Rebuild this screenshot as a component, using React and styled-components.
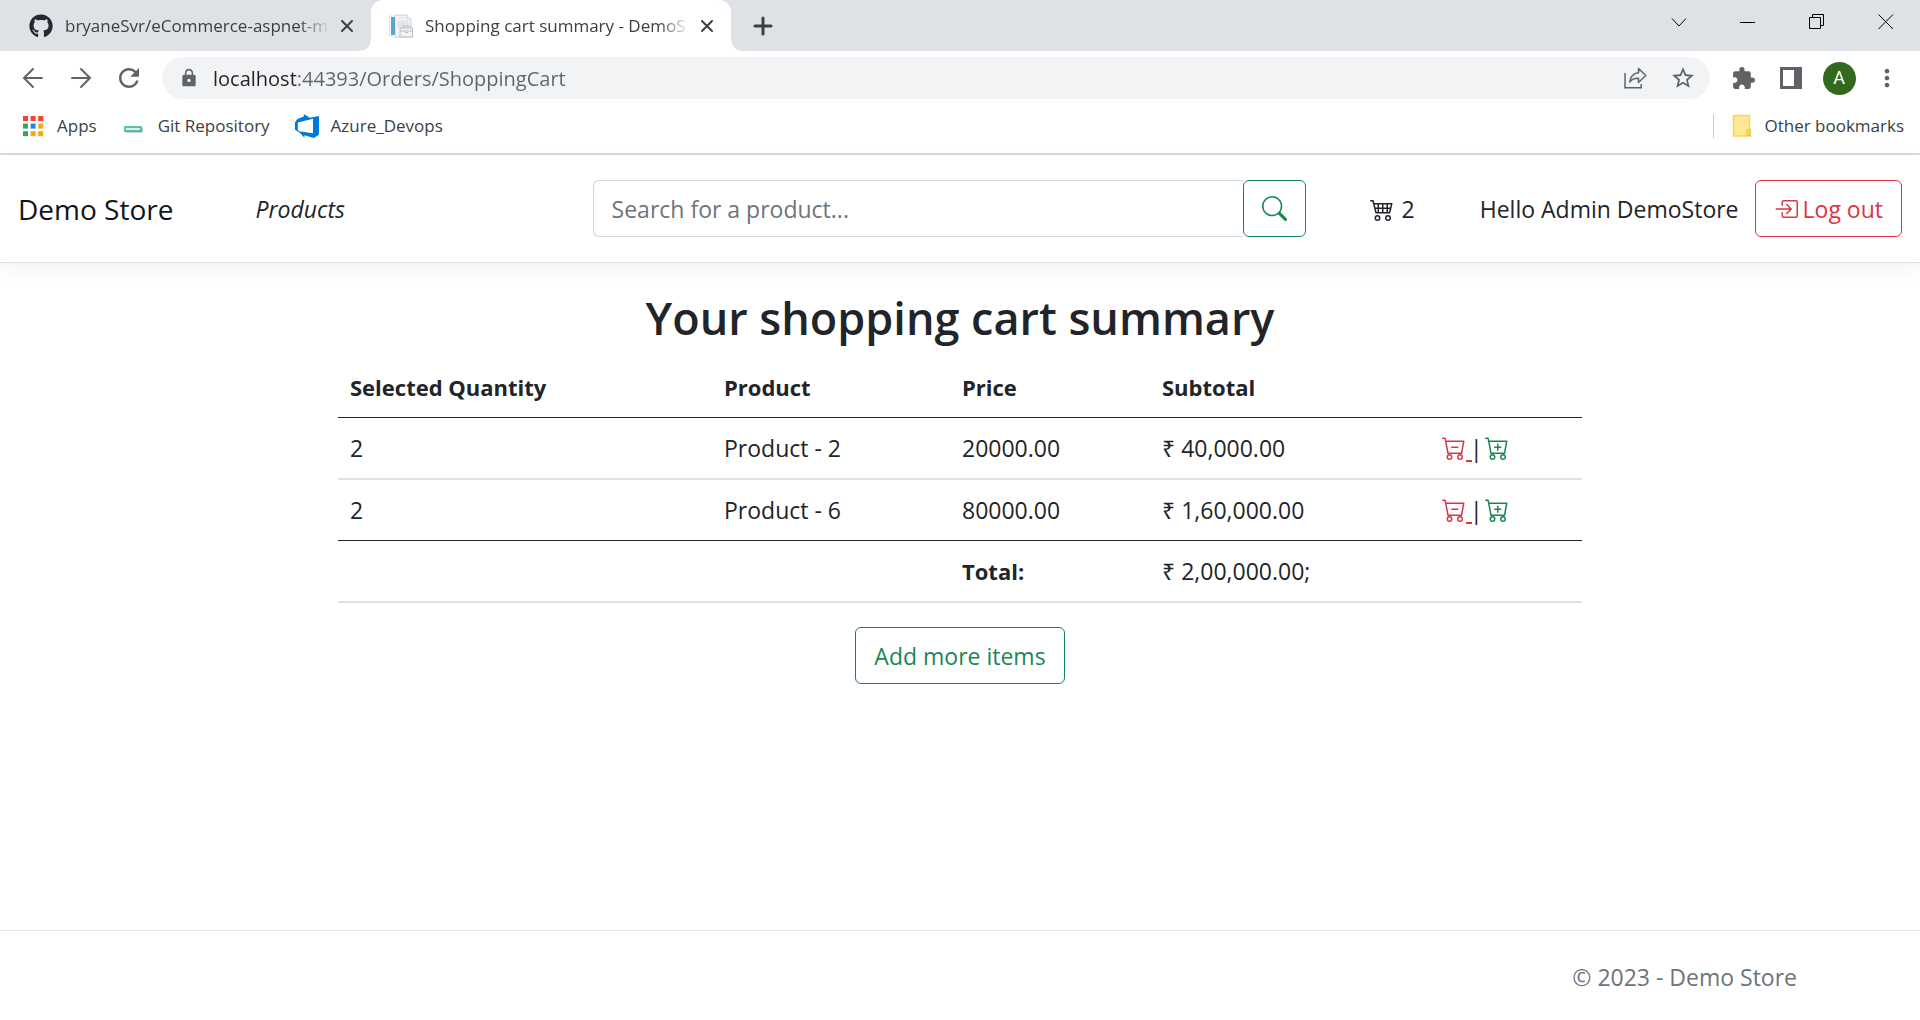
import React from "react";
import styled, { createGlobalStyle } from "styled-components";
import { BsCart4, BsSearch, BsBoxArrowInRight, BsCartDash, BsCartPlus } from "react-icons/bs";
import { FaGithub } from "react-icons/fa";
import { MdRefresh, MdLock, MdStarBorder, MdExtension, MdMoreVert } from "react-icons/md";

const GlobalStyle = createGlobalStyle`
  *, *::before, *::after { box-sizing: border-box; }
  body {
    margin: 0;
    background: #fff;
    color: #212529;
    font: 400 23px/36px "Open Sans", "Noto Sans", sans-serif;
  }
  button, input { font: inherit; color: inherit; }
  button { cursor: pointer; }
  svg { display: block; }
`;

const Window = styled.div`
  display: flex;
  flex-direction: column;
  min-height: 100vh;
`;

/* Browser chrome */
const Chrome = styled.header`
  border-bottom: 2px solid #dadada;
  font-size: 17px;
  line-height: 24px;
  color: #3c4043;
`;

const TabStrip = styled.div`
  display: flex;
  height: 51px;
  padding-left: 11px;
  background: #dee1e6;
`;

const Tab = styled.div`
  position: relative;
  display: flex;
  align-items: center;
  width: 360px;
  padding: 0 12px 0 18px;
  background: ${(p) => (p.$active ? "#fff" : "transparent")};
  border-radius: 12px 12px 0 0;
  &::before, &::after {
    content: ${(p) => (p.$active ? '""' : "none")};
    position: absolute;
    bottom: 0;
    width: 10px;
    height: 10px;
  }
  &::before { right: 100%; background: radial-gradient(circle at 0 0, transparent 9px, #fff 10px); }
  &::after { left: 100%; background: radial-gradient(circle at 100% 0, transparent 9px, #fff 10px); }
`;

const TabTitle = styled.span`
  flex: 1;
  min-width: 0;
  margin: 0 5px 0 12px;
  white-space: nowrap;
  mask-image: linear-gradient(90deg, #000 calc(100% - 32px), transparent);
`;

const IconButton = styled.button`
  display: flex;
  align-items: center;
  justify-content: center;
  flex: none;
  width: ${(p) => p.$width || 48}px;
  height: ${(p) => p.$height || 42}px;
  padding: 0;
  border: 0;
  background: none;
  color: ${(p) => p.$color || "#5f6368"};
`;

const WindowControls = styled.div`
  display: flex;
  margin-left: auto;
`;

const Toolbar = styled.div`
  display: flex;
  align-items: center;
  height: 54px;
  padding: 0 9px;
`;

const AddressBar = styled.label`
  display: flex;
  align-items: center;
  flex: 1;
  height: 42px;
  margin: 0 9px;
  padding: 0 3px 0 17px;
  border-radius: 21px;
  background: #f1f3f4;
  color: #5f6368;
`;

const AddressInput = styled.input`
  flex: 1;
  min-width: 0;
  height: 42px;
  margin-left: 14px;
  padding: 0;
  border: 0;
  outline: 0;
  font-size: 20px;
  color: #5f6368;
  background: linear-gradient(90deg, #202124 ${(p) => p.$host}px, #5f6368 ${(p) => p.$host}px);
  background-clip: text;
  -webkit-text-fill-color: transparent;
`;

const Avatar = styled.span`
  display: flex;
  align-items: center;
  justify-content: center;
  width: 33px;
  height: 33px;
  border-radius: 50%;
  background: #33691e;
  color: #fff;
  font: 400 18px/24px Roboto, sans-serif;
`;

const Bookmarks = styled.nav`
  display: flex;
  align-items: center;
  height: 48px;
  padding: 0 16px 6px 21px;
  gap: 25px;
`;

const Bookmark = styled.a`
  display: flex;
  align-items: center;
  gap: 12px;
  color: inherit;
  text-decoration: none;
`;

const OtherBookmarks = styled.div`
  display: flex;
  align-items: center;
  height: 24px;
  margin-left: auto;
  padding-left: 18px;
  border-left: 1px solid #c4c7cc;
`;

/* Store page */
const NavBar = styled.nav`
  display: flex;
  align-items: center;
  padding: 25px 18px;
  border-bottom: 1px solid #dee2e6;
  box-shadow: 0 6px 18px rgba(0, 0, 0, 0.05);
`;

const NavGroup = styled.div`
  display: flex;
  align-items: center;
  flex: ${(p) => (p.$end ? "none" : "1")};
`;

const Brand = styled.a`
  margin-right: 82px;
  font-size: 28px;
  color: #111518;
  text-decoration: none;
  white-space: nowrap;
`;

const NavLink = styled.a`
  display: flex;
  align-items: center;
  gap: 8px;
  font-style: ${(p) => (p.$italic ? "italic" : "normal")};
  color: #212529;
  text-decoration: none;
`;

const SearchForm = styled.form`
  display: flex;
  width: 713px;
  margin-right: 64px;
`;

const SearchInput = styled.input`
  flex: 1;
  min-width: 0;
  height: 57px;
  padding: 9px 18px;
  border: 1px solid #ced4da;
  border-right: 0;
  border-radius: 6px 0 0 6px;
  outline: 0;
  &::placeholder { color: #6c757d; opacity: 1; }
`;

const OutlineButton = styled.button`
  display: inline-flex;
  align-items: center;
  gap: 5px;
  height: 57px;
  padding: 0 18px;
  border: 1px solid currentColor;
  border-radius: 6px;
  background: #fff;
  color: ${(p) => (p.$danger ? "#dc3545" : "#198754")};
  text-decoration: none;
  white-space: nowrap;
`;

const Greeting = styled.span`
  margin: 0 16px 0 65px;
  white-space: nowrap;
`;

const Main = styled.main`
  display: flex;
  flex-direction: column;
  align-items: center;
  width: calc(100% * 8 / 12);
  margin: 0 auto;
  padding: 26px 18px;
`;

const Title = styled.h1`
  margin: 0 0 10px;
  font-size: 45px;
  line-height: 58px;
  font-weight: 600;
`;

const CartTable = styled.table`
  width: 100%;
  margin-bottom: 24px;
  table-layout: fixed;
  border-spacing: 0;
  text-align: left;
  th, td { padding: 12px; border-bottom: 2px solid #dee2e6; }
  th { font-size: 22px; font-weight: 700; }
  thead th, tbody tr:last-child td { border-bottom: 1px solid #212529; }
`;

const Column = styled.col`
  width: ${(p) => p.$width}px;
`;

const Actions = styled.div`
  display: flex;
  align-items: center;
  height: 36px;
`;

const ActionLink = styled.a`
  display: flex;
  align-items: center;
  color: ${(p) => (p.$danger ? "#dc3545" : "#198754")};
  text-decoration: underline 2px;
  text-underline-offset: 3px;
  white-space: pre;
`;

const Divider = styled.span`
  margin: 0 2px 0 -2px;
`;

const Footer = styled.footer`
  margin-top: auto;
  padding: 28px 0 25px;
  border-top: 1px solid #dee2e6;
  color: #6c757d;
`;

const FooterInner = styled.div`
  max-width: 1710px;
  margin: 0 auto;
  padding: 0 18px;
  text-align: right;
`;

const PageIcon = () => (
  <svg width="24" height="24" viewBox="0 0 24 24">
    <path d="M6 1h12l4 4v18H6z" fill="#f4f6f8" stroke="#c9ced3" />
    <path d="M18 1v4h4" fill="#fff" stroke="#c9ced3" />
    <path d="M9 4h7M9 7h10v6H9z" fill="#e3e7ec" stroke="#dde2e8" />
    <rect x="0.5" y="2" width="6" height="20" fill="#fff" stroke="#dfe3e7" />
    <rect x="2" y="3" width="4" height="18" fill="#5ba3d4" />
    <rect x="11" y="14" width="12.5" height="9" fill="#f2f3f5" stroke="#b9bec3" />
    <path d="M14 14v-2h7v2M11 17h12M16 18.5h3" fill="none" stroke="#b9bec3" />
  </svg>
);

const AppsIcon = () => {
  const colors = ["#f44336", "#f44336", "#f44336", "#34a853", "#1e88e5", "#fba90a", "#34a853", "#fba90a", "#fba90a"];
  return (
    <svg width="24" height="24" viewBox="0 0 24 24">
      {colors.map((c, i) => (
        <rect key={i} x={2 + (i % 3) * 7.6} y={2 + Math.floor(i / 3) * 7.6} width="5" height="5" fill={c} />
      ))}
    </svg>
  );
};

const GitIcon = () => (
  <svg width="24" height="24" viewBox="0 0 24 24">
    <rect x="4" y="14" width="17" height="5" fill="#c9cdd0" />
    <rect x="3" y="13" width="16" height="4" fill="#d8f1ea" stroke="#35b597" strokeWidth="1.6" />
  </svg>
);

const AzureIcon = () => (
  <svg width="24" height="24" viewBox="0 0 24 24">
    <path
      fill="#0078d7"
      fillRule="evenodd"
      d="M0 8.2 2.4 5 8.8 2.5V0l6 3.8L24 2v18.8L18.8 24l-9.4-2.8v2.6L5.200 19 0 15.8zM2.800 8.500v7.500l1.400 1.200 13.800 2V4.800z"
    />
  </svg>
);

const FolderIcon = () => (
  <svg width="20" height="24" viewBox="0 0 20 24">
    <path d="M1.5 1.5h16v14.5h1V22h-17z" fill="#ffe793" stroke="#f9d648" strokeWidth="1.4" />
    <path d="M15.2 21.5v-5a1.3 1.3 0 0 1 2.6 0v5z" fill="#ffe27a" stroke="#eabf2e" />
  </svg>
);

const ShareIcon = () => (
  <svg width="24" height="24" viewBox="0 0 24 24" fill="none" stroke="#5f6368" strokeWidth="1.5">
    <path d="M2 7v14.8h16.2V18" />
    <path d="M15.5 2.500 22.800 9.500l-7.300 7v-4.300c-4.200-.1-6.800.9-8.700 3.800.6-5.400 3.300-8.700 8.700-9.300z" strokeLinejoin="round" />
  </svg>
);

const SidePanelIcon = () => (
  <svg width="22" height="22" viewBox="0 0 22 22">
    <path fill="#5f6368" fillRule="evenodd" d="M0 0h22v22H0zM3 3v16h11V3z" />
  </svg>
);

const StrokeIcon = ({ size, d, weight = 2 }) => (
  <svg width={size} height={size} viewBox={`0 0 ${size} ${size}`} fill="none" stroke="currentColor" strokeWidth={weight} strokeLinecap="round">
    <path d={d} />
  </svg>
);

const windowIcons = [
  ["Search tabs", "M1 4.500 8 12l7-7.500"],
  ["Minimize", "M0 8.500h15"],
  ["Restore", "M.5 3.500h11v11H.5zM3.500 3V.5h11v11H12"],
  ["Close window", "M.5.5l14.500 14.500M15 .5.5 15"],
];

const tabs = [
  { title: "bryaneSvr/eCommerce-aspnet-m", icon: <FaGithub size={24} color="#24292f" /> },
  { title: "Shopping cart summary - DemoS", icon: <PageIcon />, active: true },
];

const items = [
  { quantity: 2, product: "Product - 2", price: "20000.00", subtotal: "₹ 40,000.00" },
  { quantity: 2, product: "Product - 6", price: "80000.00", subtotal: "₹ 1,60,000.00" },
];

export default function App() {
  return (
    <Window>
      <GlobalStyle />
      <Chrome>
        <TabStrip>
          {tabs.map((tab) => (
            <Tab key={tab.title} $active={tab.active}>
              {tab.icon}
              <TabTitle>{tab.title}</TabTitle>
              <IconButton $width={24} $height={24} $color="#3c4043" aria-label="Close tab">
                <StrokeIcon size={14} d="M2 2l10 10M12 2 2 12" />
              </IconButton>
            </Tab>
          ))}
          <IconButton $width={64} $height={51} $color="#3c4043" aria-label="New tab">
            <StrokeIcon size={20} d="M10 2v16M2 10h16" weight={3} />
          </IconButton>
          <WindowControls>
            {windowIcons.map(([label, d]) => (
              <IconButton key={label} $width={69} $height={43} aria-label={label}>
                <svg width="16" height="16" viewBox="0 0 16 16" fill="none" stroke="#000">
                  <path d={d} />
                </svg>
              </IconButton>
            ))}
          </WindowControls>
        </TabStrip>
        <Toolbar>
          <IconButton aria-label="Back"><StrokeIcon size={22} d="M11 2 2 11l9 9M2 11h18" /></IconButton>
          <IconButton aria-label="Forward"><StrokeIcon size={22} d="M11 2l9 9-9 9M20 11H2" /></IconButton>
          <IconButton aria-label="Reload"><MdRefresh size={30} /></IconButton>
          <AddressBar>
            <MdLock size={20} />
            <AddressInput $host={85} aria-label="Address" defaultValue="localhost:44393/Orders/ShoppingCart" />
            <IconButton type="button" aria-label="Share"><ShareIcon /></IconButton>
            <IconButton type="button" aria-label="Bookmark this page"><MdStarBorder size={26} /></IconButton>
          </AddressBar>
          <IconButton aria-label="Extensions"><MdExtension size={25} /></IconButton>
          <IconButton aria-label="Side panel"><SidePanelIcon /></IconButton>
          <IconButton aria-label="Profile"><Avatar>A</Avatar></IconButton>
          <IconButton aria-label="Menu"><MdMoreVert size={28} /></IconButton>
        </Toolbar>
        <Bookmarks>
          <Bookmark href="#apps"><AppsIcon />Apps</Bookmark>
          <Bookmark href="#git"><GitIcon />Git Repository</Bookmark>
          <Bookmark href="#azure"><AzureIcon />Azure_Devops</Bookmark>
          <OtherBookmarks>
            <Bookmark href="#other"><FolderIcon />Other bookmarks</Bookmark>
          </OtherBookmarks>
        </Bookmarks>
      </Chrome>

      <NavBar>
        <NavGroup>
          <Brand href="#home">Demo Store</Brand>
          <NavLink href="#products" $italic>Products</NavLink>
        </NavGroup>
        <SearchForm>
          <SearchInput type="text" aria-label="Search for a product" placeholder="Search for a product..." />
          <OutlineButton type="button" aria-label="Search"><BsSearch size={25} /></OutlineButton>
        </SearchForm>
        <NavGroup $end>
          <NavLink href="#cart"><BsCart4 size={24} />2</NavLink>
          <Greeting>Hello Admin DemoStore</Greeting>
          <OutlineButton $danger><BsBoxArrowInRight size={24} />Log out</OutlineButton>
        </NavGroup>
      </NavBar>

      <Main>
        <Title>Your shopping cart summary</Title>
        <CartTable>
          <colgroup>
            <Column $width={374} />
            <Column $width={238} />
            <Column $width={200} />
            <Column $width={280} />
            <Column $width={152} />
          </colgroup>
          <thead>
            <tr>
              <th>Selected Quantity</th>
              <th>Product</th>
              <th>Price</th>
              <th>Subtotal</th>
              <th />
            </tr>
          </thead>
          <tbody>
            {items.map((item) => (
              <tr key={item.product}>
                <td>{item.quantity}</td>
                <td>{item.product}</td>
                <td>{item.price}</td>
                <td>{item.subtotal}</td>
                <td>
                  <Actions>
                    <ActionLink $danger href="#remove" aria-label={"Remove one " + item.product}>
                      <BsCartDash size={24} />
                      <span> </span>
                    </ActionLink>
                    <Divider>|</Divider>
                    <ActionLink href="#add" aria-label={"Add one " + item.product}>
                      <BsCartPlus size={24} />
                    </ActionLink>
                  </Actions>
                </td>
              </tr>
            ))}
          </tbody>
          <tfoot>
            <tr>
              <td colSpan={2} />
              <th>Total:</th>
              <td>₹ 2,00,000.00;</td>
              <td />
            </tr>
          </tfoot>
        </CartTable>
        <OutlineButton as="a" href="#products">Add more items</OutlineButton>
      </Main>

      <Footer>
        <FooterInner>© 2023 - Demo Store</FooterInner>
      </Footer>
    </Window>
  );
}
